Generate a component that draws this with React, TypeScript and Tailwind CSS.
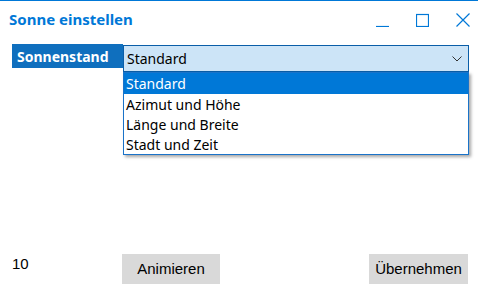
const options = ["Standard", "Azimut und Höhe", "Länge und Breite", "Stadt und Zeit"];

export default function App() {
    const ui = { fontFamily: '"Noto Sans", "Open Sans", sans-serif' };
    const classic = { fontFamily: '"Liberation Sans", Arial, sans-serif' };

    return (
        <div className="w-[478px] h-[293px] bg-white border-t border-[#0078d7] flex flex-col" style={ui}>
            {/* title bar */}
            <div className="h-[37px] flex items-center pl-[9px]">
                <span className="text-[15px] font-bold text-[#0078d7] leading-none">Sonne einstellen</span>
                <div className="ml-auto flex items-center gap-[27px] pr-[8px]">
                    <svg width="13" height="14" viewBox="0 0 13 14">
                        <path d="M0 13.5 H13" stroke="#0078d7" strokeWidth="1.2" />
                    </svg>
                    <svg width="13" height="14" viewBox="0 0 13 14">
                        <rect x="0.5" y="1.5" width="12" height="12" fill="none" stroke="#0078d7" strokeWidth="1.2" />
                    </svg>
                    <svg width="14" height="14" viewBox="0 0 14 14">
                        <path d="M0.5 0.5 L13.5 13.5 M13.5 0.5 L0.5 13.5" stroke="#0078d7" strokeWidth="1.2" />
                    </svg>
                </div>
            </div>

            {/* sun position row */}
            <div className="flex items-start pl-[12px] pr-[9px] pt-[6px]">
                <div className="w-[111px] h-[24px] bg-[#0f6fbe] text-white font-bold text-[14px] pl-[5px] flex items-center">
                    Sonnenstand
                </div>
                <div className="relative flex-1 mt-[1px]">
                    <div className="h-[27px] bg-[#cce4f7] border border-[#0a5ea8] flex items-center pl-[3px] pr-[6px] text-[14px] text-black">
                        <span>Standard</span>
                        <svg className="ml-auto" width="10" height="6" viewBox="0 0 10 6">
                            <path d="M0.5 0.5 L5 5 L9.5 0.5" fill="none" stroke="#333" strokeWidth="1" />
                        </svg>
                    </div>
                    <div className="absolute left-0 right-0 top-[27px] bg-white border border-[#1a73c9] shadow-[2px_2px_3px_rgba(0,0,0,0.35)]">
                        {options.map((o, i) => (
                            <div
                                key={o}
                                className={`h-[20px] pl-[2px] flex items-center text-[14px] ${i === 0 ? "bg-[#0078d7] text-white h-[21px]" : "text-black"}`}
                            >
                                {o}
                            </div>
                        ))}
                    </div>
                </div>
            </div>

            <div className="flex-1" />

            {/* bottom */}
            <div className="flex items-start pl-[12px] pr-[10px] pb-[9px]" style={classic}>
                <div className="w-[110px] text-[15px] text-black leading-[20px]">10</div>
                <button className="w-[98px] h-[30px] bg-[#d9d9d9] text-[15px] text-black">Animieren</button>
                <button className="ml-auto w-[99px] h-[30px] bg-[#d9d9d9] text-[15px] text-black">Übernehmen</button>
            </div>
        </div>
    );
}
